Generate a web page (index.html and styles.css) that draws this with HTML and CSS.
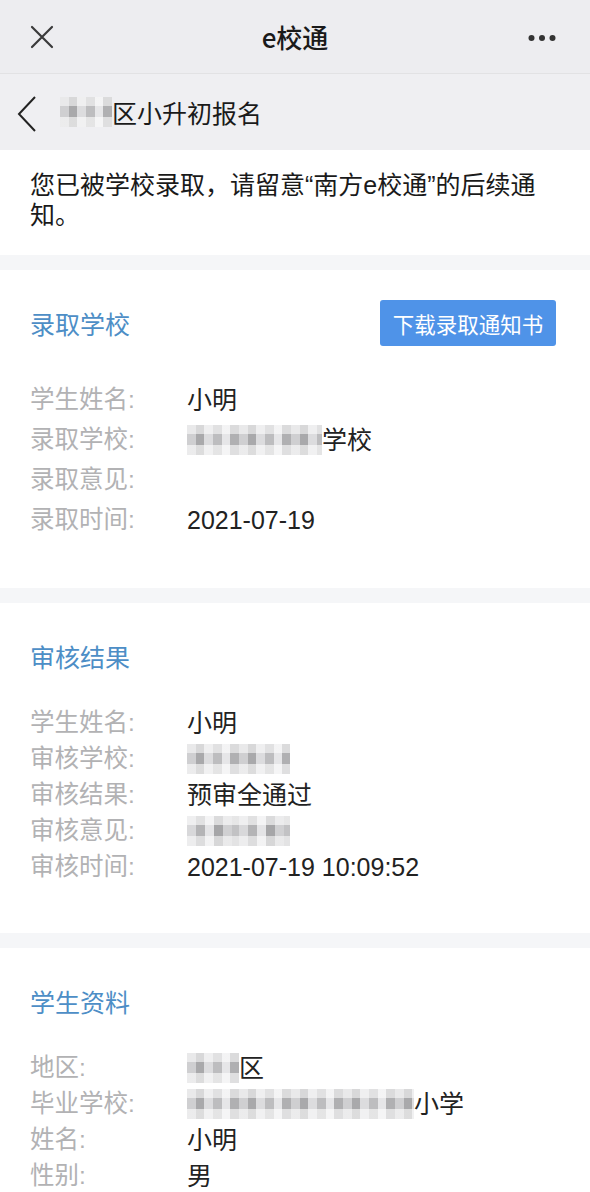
FILE: index.html
```html
<!DOCTYPE html>
<html lang="zh-CN">
<head>
<meta charset="utf-8">
<title>e校通</title>
<link rel="stylesheet" href="styles.css">
</head>
<body>
<header class="topbar">
  <svg class="icon-close" width="24" height="24" viewBox="0 0 24 24"><path d="M2 2 L22 22 M22 2 L2 22" stroke="#3a3a3a" stroke-width="2.2" fill="none" stroke-linecap="round"/></svg>
  <div class="topbar-title">e校通</div>
  <svg class="icon-more" width="30" height="8" viewBox="0 0 30 8"><circle cx="3.5" cy="4" r="3" fill="#333"/><circle cx="14" cy="4" r="3" fill="#333"/><circle cx="24.5" cy="4" r="3" fill="#333"/></svg>
</header>
<nav class="navbar">
  <svg class="icon-back" width="22" height="36" viewBox="0 0 22 36"><path d="M19 1 L3 18 L19 35" stroke="#222" stroke-width="2" fill="none"/></svg>
  <div class="navbar-title"><span class="blur blur-2"></span>区小升初报名</div>
</nav>

<section class="notice">您已被学校录取，请留意“南方e校通”的后续通知。</section>

<section class="card">
  <div class="card-head">
    <h2 class="card-title">录取学校</h2>
    <button class="btn">下载录取通知书</button>
  </div>
  <dl class="info info--loose">
    <dt>学生姓名:</dt><dd>小明</dd>
    <dt>录取学校:</dt><dd><span class="blur blur-school"></span>学校</dd>
    <dt>录取意见:</dt><dd></dd>
    <dt>录取时间:</dt><dd>2021-07-19</dd>
  </dl>
</section>

<section class="card">
  <div class="card-head">
    <h2 class="card-title">审核结果</h2>
  </div>
  <dl class="info">
    <dt>学生姓名:</dt><dd>小明</dd>
    <dt>审核学校:</dt><dd><span class="blur blur-short"></span></dd>
    <dt>审核结果:</dt><dd>预审全通过</dd>
    <dt>审核意见:</dt><dd><span class="blur blur-short blur-alt"></span></dd>
    <dt>审核时间:</dt><dd>2021-07-19 10:09:52</dd>
  </dl>
</section>

<section class="card">
  <div class="card-head">
    <h2 class="card-title">学生资料</h2>
  </div>
  <dl class="info">
    <dt>地区:</dt><dd><span class="blur blur-2"></span>区</dd>
    <dt>毕业学校:</dt><dd><span class="blur blur-long"></span>小学</dd>
    <dt>姓名:</dt><dd>小明</dd>
    <dt>性别:</dt><dd>男</dd>
  </dl>
</section>
</body>
</html>
```

FILE: styles.css
```css
* { box-sizing: border-box; }
html, body { margin: 0; padding: 0; }
body {
  width: 590px;
  background: #f5f6f8;
  font-family: "Liberation Sans", "Noto Sans CJK SC", sans-serif;
  color: #222;
}
.topbar {
  height: 74px;
  background: #ededf0;
  border-bottom: 1px solid #e2e2e4;
  display: flex;
  align-items: center;
  justify-content: space-between;
  padding: 0 32px 0 30px;
  position: relative;
}
.icon-close { display: block; margin-top: 1px; }
.topbar-title {
  position: absolute;
  left: 0; right: 0;
  text-align: center;
  font-family: "Noto Sans CJK SC", sans-serif;
  font-size: 26px;
  font-weight: 500;
  color: #1a1a1a;
  pointer-events: none;
}
.icon-more { display: block; margin-top: 2px; }
.navbar {
  height: 76px;
  background: #efeff2;
  display: flex;
  align-items: center;
  padding-left: 16px;
}
.icon-back { display: block; margin-top: 4px; }
.navbar-title {
  margin-left: 22px;
  font-size: 25px;
  color: #1a1a1a;
  display: flex;
  align-items: center;
}
.notice {
  background: #fff;
  padding: 20px 40px 25px 30px;
  font-size: 25px;
  line-height: 30px;
  color: #1a1a1a;
  margin-bottom: 15px;
}
.card {
  background: #fff;
  padding: 30px 30px 48px;
  margin-bottom: 15px;
}
.card-head {
  height: 46px;
  display: flex;
  align-items: center;
  justify-content: space-between;
}
.card-title {
  margin: 0;
  font-size: 25px;
  font-weight: 400;
  color: #4d8ec6;
}
.btn {
  width: 176px;
  height: 46px;
  margin-right: 4px;
  border: 0;
  border-radius: 3px;
  background: #4f93e8;
  color: #fff;
  font-family: inherit;
  font-size: 21.5px;
  padding: 0;
}
.info {
  display: grid;
  grid-template-columns: 157px 1fr;
  margin: 26px 0 0;
  font-size: 25px;
  line-height: 36px;
}
.info--loose { margin-top: 34px; line-height: 40px; }
.info dt { color: #b2b2b4; font-size: 24.5px; }
.info dd { margin: 0; color: #222; display: flex; align-items: center; min-height: 36px; }
.blur {
  display: inline-block;
  height: 30px;
  background:
    linear-gradient(to bottom, rgba(255,255,255,.55) 0 30%, rgba(255,255,255,0) 30% 68%, rgba(255,255,255,.6) 68%),
    repeating-linear-gradient(90deg, #cfcfd1 0 9px, #a9a9ab 9px 17px, #dcdcde 17px 26px, #bdbdbf 26px 35px, #e6e6e8 35px 43px, #b0b0b2 43px 52px);
}
.blur-alt {
  background:
    linear-gradient(to bottom, rgba(255,255,255,.6) 0 30%, rgba(255,255,255,0) 30% 68%, rgba(255,255,255,.55) 68%),
    repeating-linear-gradient(90deg, #d8d8da 0 9px, #b4b4b6 9px 18px, #e4e4e6 18px 27px, #a6a6a8 27px 36px, #d0d0d2 36px 45px, #c2c2c4 45px 52px);
}
.blur-2 { width: 52px; }
.blur-school { width: 135px; }
.blur-short { width: 103px; }
.blur-long { width: 227px; }
.navbar-title .blur { height: 30px; }
```
